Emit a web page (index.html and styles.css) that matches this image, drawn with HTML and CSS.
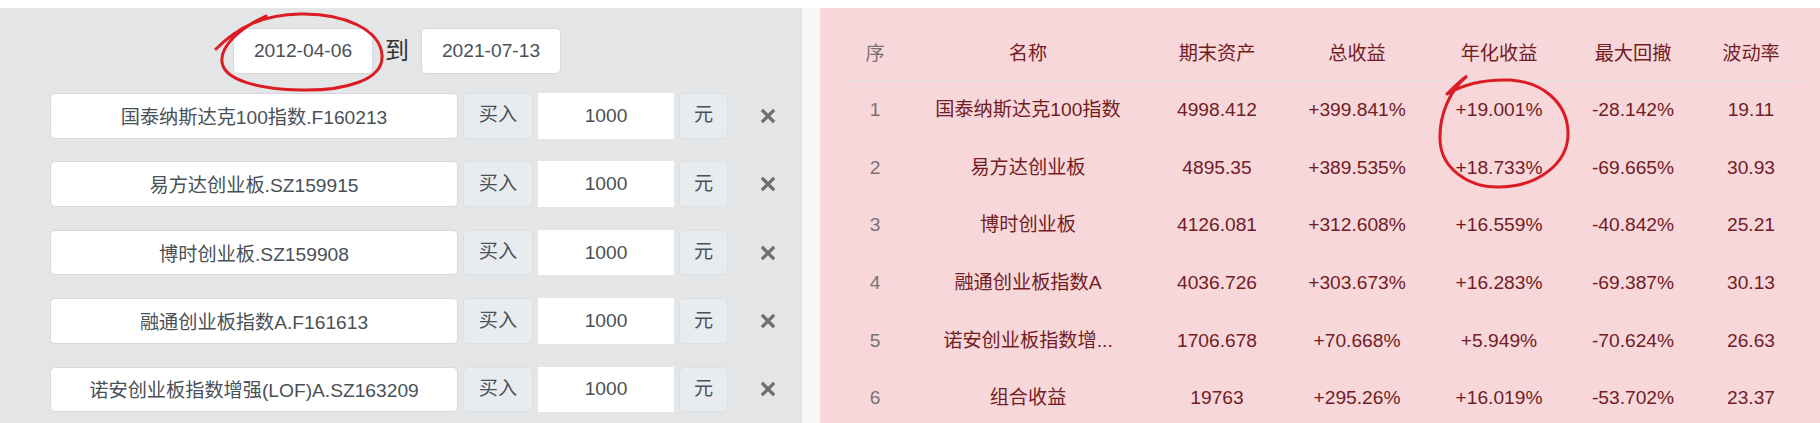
FILE: index.html
```html
<!DOCTYPE html>
<html lang="zh-CN">

<head>
    <meta charset="UTF-8">
    <meta name="viewport" content="width=device-width, initial-scale=1.0">
    <title>基金组合回测</title>
    <link rel="stylesheet" href="styles.css">
</head>

<body>
    <div class="page">
        <div class="setup">
            <div class="dates">
                <input class="field date" type="text" value="2012-04-06">
                <span class="to">到</span>
                <input class="field date" type="text" value="2021-07-13">
            </div>

            <div class="fund">
                <input class="field name" type="text" value="国泰纳斯达克100指数.F160213">
                <span class="addon buy">买入</span>
                <input class="field amount" type="text" value="1000">
                <span class="addon unit">元</span>
                <span class="remove"><svg viewBox="0 0 16 16"><path d="M3 3L13 13M13 3L3 13" /></svg></span>
            </div>
            <div class="fund">
                <input class="field name" type="text" value="易方达创业板.SZ159915">
                <span class="addon buy">买入</span>
                <input class="field amount" type="text" value="1000">
                <span class="addon unit">元</span>
                <span class="remove"><svg viewBox="0 0 16 16"><path d="M3 3L13 13M13 3L3 13" /></svg></span>
            </div>
            <div class="fund">
                <input class="field name" type="text" value="博时创业板.SZ159908">
                <span class="addon buy">买入</span>
                <input class="field amount" type="text" value="1000">
                <span class="addon unit">元</span>
                <span class="remove"><svg viewBox="0 0 16 16"><path d="M3 3L13 13M13 3L3 13" /></svg></span>
            </div>
            <div class="fund">
                <input class="field name" type="text" value="融通创业板指数A.F161613">
                <span class="addon buy">买入</span>
                <input class="field amount" type="text" value="1000">
                <span class="addon unit">元</span>
                <span class="remove"><svg viewBox="0 0 16 16"><path d="M3 3L13 13M13 3L3 13" /></svg></span>
            </div>
            <div class="fund">
                <input class="field name" type="text" value="诺安创业板指数增强(LOF)A.SZ163209">
                <span class="addon buy">买入</span>
                <input class="field amount" type="text" value="1000">
                <span class="addon unit">元</span>
                <span class="remove"><svg viewBox="0 0 16 16"><path d="M3 3L13 13M13 3L3 13" /></svg></span>
            </div>
        </div>

        <div class="result">
            <table class="stats">
                <colgroup>
                    <col style="width: 54px">
                    <col style="width: 252px">
                    <col style="width: 126px">
                    <col style="width: 154px">
                    <col style="width: 130px">
                    <col style="width: 138px">
                    <col style="width: 98px">
                </colgroup>
                <thead>
                    <tr>
                        <th class="idx">序</th>
                        <th>名称</th>
                        <th>期末资产</th>
                        <th>总收益</th>
                        <th>年化收益</th>
                        <th>最大回撤</th>
                        <th>波动率</th>
                    </tr>
                </thead>
                <tbody>
                    <tr>
                        <td class="idx">1</td>
                        <td>国泰纳斯达克100指数</td>
                        <td>4998.412</td>
                        <td>+399.841%</td>
                        <td>+19.001%</td>
                        <td>-28.142%</td>
                        <td>19.11</td>
                    </tr>
                    <tr>
                        <td class="idx">2</td>
                        <td>易方达创业板</td>
                        <td>4895.35</td>
                        <td>+389.535%</td>
                        <td>+18.733%</td>
                        <td>-69.665%</td>
                        <td>30.93</td>
                    </tr>
                    <tr>
                        <td class="idx">3</td>
                        <td>博时创业板</td>
                        <td>4126.081</td>
                        <td>+312.608%</td>
                        <td>+16.559%</td>
                        <td>-40.842%</td>
                        <td>25.21</td>
                    </tr>
                    <tr>
                        <td class="idx">4</td>
                        <td>融通创业板指数A</td>
                        <td>4036.726</td>
                        <td>+303.673%</td>
                        <td>+16.283%</td>
                        <td>-69.387%</td>
                        <td>30.13</td>
                    </tr>
                    <tr>
                        <td class="idx">5</td>
                        <td>诺安创业板指数增...</td>
                        <td>1706.678</td>
                        <td>+70.668%</td>
                        <td>+5.949%</td>
                        <td>-70.624%</td>
                        <td>26.63</td>
                    </tr>
                    <tr>
                        <td class="idx">6</td>
                        <td>组合收益</td>
                        <td>19763</td>
                        <td>+295.26%</td>
                        <td>+16.019%</td>
                        <td>-53.702%</td>
                        <td>23.37</td>
                    </tr>
                </tbody>
            </table>
        </div>
    </div>

    <!-- hand-drawn red marks over the screenshot -->
    <svg class="marks" viewBox="0 0 1820 423">
        <path d="M216 49 C238 27 262 15 300 14 C345 13 380 30 382 55 C384 80 345 91 300 90 C258 89 224 80 222 62 C220 46 240 28 266 16" />
        <path d="M1447 94 C1455 86 1462 79 1467 76 C1450 90 1439 115 1440 140 C1441 168 1468 188 1500 187 C1540 186 1569 162 1568 132 C1567 102 1542 82 1510 80 C1482 79 1462 85 1447 94" />
    </svg>
</body>

</html>
```

FILE: styles.css
```css
* {
    margin: 0;
    padding: 0;
    box-sizing: border-box;
}

body {
    background-color: #fff;
    padding-top: 8px;
    font-family: "Liberation Sans", "Noto Sans CJK SC", sans-serif;
    font-size: 19.2px;
    line-height: 1.5;
    overflow: hidden;
}

.page {
    display: flex;
    gap: 18px;
    height: 415px;
    background-color: #f7f7f7;
}

.setup {
    width: 802px;
    flex: 0 0 802px;
    background-color: #e4e5e7;
    padding: 20px 0 0 50px;
}

.dates {
    display: flex;
    justify-content: center;
    align-items: center;
    gap: 12px;
    margin-left: -58px;
    margin-bottom: 19.4px;
}

.field {
    height: 45.6px;
    padding: 0 14px;
    border: 1px solid #d6d9dc;
    border-radius: 5px;
    background-color: #fff;
    color: #495057;
    font-family: inherit;
    font-size: 19.2px;
    text-align: center;
    outline: none;
}

.date {
    width: 140px;
}

.to {
    font-size: 24px;
    color: #333;
}

.fund {
    display: flex;
    align-items: center;
    gap: 5px;
    margin-bottom: 22.8px;
}

.name {
    width: 408px;
}

.amount {
    width: 136px;
    border-radius: 0;
    border-color: #fff;
}

.addon {
    display: flex;
    justify-content: center;
    align-items: center;
    height: 45.6px;
    border: 1px solid #dde0e3;
    border-radius: 5px;
    background-color: #e9ecef;
    color: #495057;
}

.buy {
    width: 70px;
}

.unit {
    width: 49px;
}

.remove {
    display: flex;
    margin-left: 27px;
    width: 16px;
    height: 16px;
}

.remove svg {
    width: 16px;
    height: 16px;
    stroke: #6f6f6f;
    stroke-width: 3.2;
    stroke-linecap: square;
}

.result {
    flex: 1;
    background-color: #f8d7da;
    padding: 20px 20px 0 28px;
    overflow: hidden;
}

.stats {
    width: 952px;
    table-layout: fixed;
    border-collapse: collapse;
    color: #721c24;
}

.stats th,
.stats td {
    padding: 11.5px 0;
    text-align: center;
    font-weight: normal;
    white-space: nowrap;
    overflow: hidden;
}

.stats th {
    border-bottom: 2px solid #eadcdf;
}

.stats td {
    padding: 14.4px 0;
}

.stats .idx {
    color: #7b7172;
}

.marks {
    position: absolute;
    left: 0;
    top: 0;
    width: 1820px;
    height: 423px;
    pointer-events: none;
    fill: none;
    stroke: #dc1c24;
    stroke-width: 3;
    stroke-linecap: round;
}
```
